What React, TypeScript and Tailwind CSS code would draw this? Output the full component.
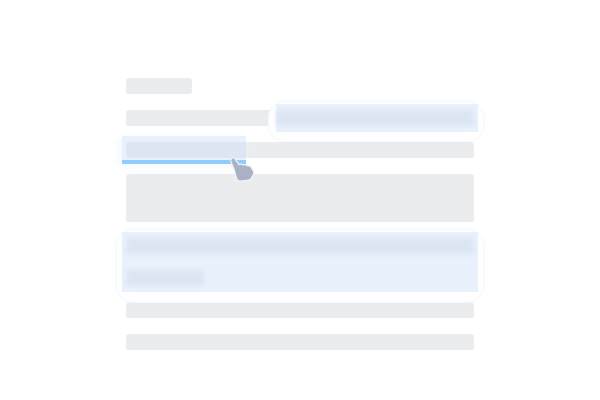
function Bar({ className = '' }: { className?: string }) {
  return <div className={`h-4 rounded-[3px] bg-[#ebecee] ${className}`} />;
}

function HandCursor() {
  return (
    <svg className="absolute left-[102px] top-[13px] h-[30px] w-[30px]" viewBox="0 0 30 30">
      <path
        d="M3.500 3.500c1-1 2.700-.8 3.500.4l4 5.800c1.500-.8 3.200-.6 4.300.3 1.500-.5 3-.2 4 .8 1.700-.2 3.300.5 4.200 1.900l1.800 3.300c.7 1.300.6 2.800-.2 4l-1.900 3.400c-.6 1.100-1.500 1.700-2.700 1.800l-8.300.8c-1.600.1-2.800-.7-3.400-2.200l-1.300-4-.9-4.300L3 7c-.5-1.200-.4-2.600.5-3.500Z"
        fill="#a9b1c2"
        stroke="#edf3fd"
        strokeWidth="1.200"
      />
    </svg>
  );
}

export default function App() {
  return (
    <div className="h-[400px] w-[600px] overflow-hidden bg-white pt-[78px]">
      <div className="mx-auto flex w-[348px] flex-col gap-4">
        <Bar className="w-[66px]" />

        <div className="relative z-10">
          <Bar />
          <div className="absolute -right-[11px] -top-[10px] bottom-[-17px] left-[142px] rounded-[18px] border-2 border-[#f7fafe] bg-white" />
          <div className="absolute -right-1 -top-1.5 -bottom-1.5 left-[150px] bg-[#e9f1fd]" />
          <div className="absolute bottom-0 left-[150px] right-0 top-0 rounded-[3px] bg-[#dce6f2] blur-[2px]" />
        </div>

        <div className="relative z-20">
          <Bar />
          <div className="absolute -left-1 -top-1.5 -bottom-1.5 w-[124px] border-b-4 border-[#90cdfc] bg-[#e9f1fd] shadow-[-4px_2px_10px_#f5f8fe]" />
          <div className="absolute left-0 top-0 h-4 w-[120px] rounded-l-[3px] bg-[#dde6f2]" />
          <HandCursor />
        </div>

        <div className="h-12 rounded-[3px] bg-[#ebecee]" />

        <div className="relative z-10 flex flex-col gap-4">
          <div className="absolute -inset-x-[11px] -top-[10px] bottom-[-17px] rounded-[18px] border-2 border-[#f7fafe] bg-white" />
          <div className="absolute -inset-x-1 -inset-y-1.5 bg-[#e9f1fd]" />
          <div className="relative h-4 rounded-[3px] bg-[#dce6f2] blur-[2px]" />
          <div className="relative h-4 w-[78px] rounded-[3px] bg-[#dce6f2] blur-[2px]" />
        </div>

        <Bar />
        <Bar />
      </div>
    </div>
  );
}
